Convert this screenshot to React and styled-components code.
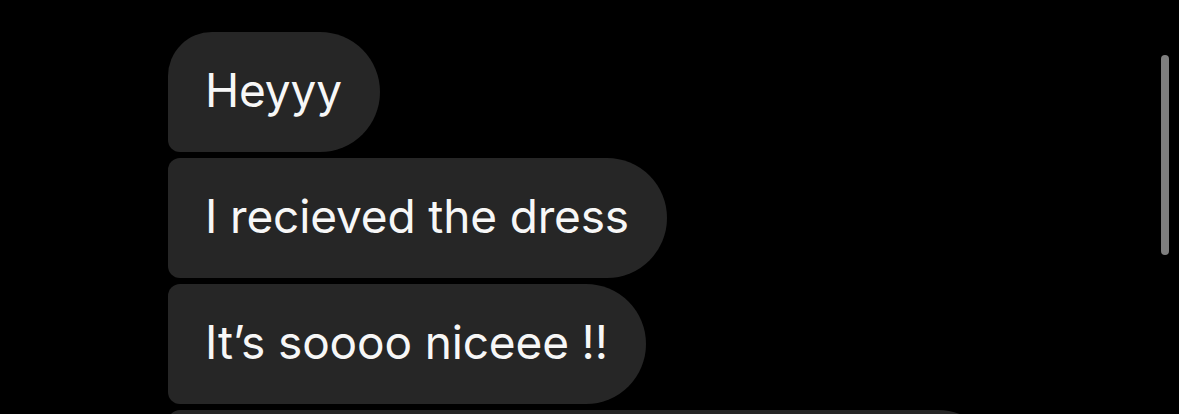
import React from "react";
import styled, { createGlobalStyle } from "styled-components";

const GlobalStyle = createGlobalStyle`
	html, body {
		margin: 0;
		padding: 0;
		background: #000;
		overflow: hidden;
	}
`;

const Screen = styled.main`
	position: relative;
	width: 1179px;
	height: 414px;
	background: #000;
	padding: 32px 0 0 168px;
	box-sizing: border-box;
	overflow: hidden;
`;

const Thread = styled.ul`
	list-style: none;
	margin: 0;
	padding: 0;
	display: flex;
	flex-direction: column;
	align-items: flex-start;
	gap: 6px;
`;

const Bubble = styled.li`
	display: flex;
	align-items: center;
	height: 120px;
	box-sizing: border-box;
	padding: 0 38px 4px 37px;
	background: #262626;
	color: #f7f7f7;
	font-family: Inter, "Noto Sans", sans-serif;
	font-size: 46px;
	letter-spacing: -0.15px;
	white-space: nowrap;
	border-radius: ${p => (p.$first ? "44px" : "12px")} 60px 60px 12px;
`;

const Scrollbar = styled.div`
	position: absolute;
	top: 55px;
	left: 1161px;
	width: 8px;
	height: 200px;
	border-radius: 4px;
	background: #7e7e7e;
`;

const messages = [
	{ text: "Heyyy" },
	{ text: "I recieved the dress" },
	{ text: "It’s soooo niceee !!" },
	{ text: "", width: 830 },
];

export default function App() {
	return (
		<Screen>
			<GlobalStyle />
			<Thread>
				{messages.map((m, i) => (
					<Bubble
						key={i}
						$first={i === 0}
						style={m.width ? { width: m.width } : undefined}
					>
						{m.text}
					</Bubble>
				))}
			</Thread>
			<Scrollbar />
		</Screen>
	);
}
